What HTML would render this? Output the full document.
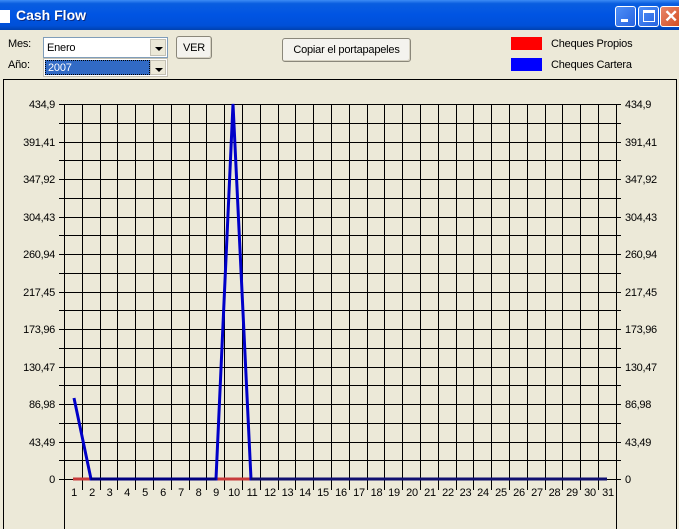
<!DOCTYPE html>
<html><head><meta charset="utf-8"><style>
*{margin:0;padding:0;box-sizing:border-box}
body{width:679px;height:529px;overflow:hidden;background:#ece9d8;font-family:"Liberation Sans",sans-serif;font-size:11px;letter-spacing:-0.2px;position:relative;color:#000}
.a{position:absolute}
.title{left:0;top:0;width:679px;height:30px;background:linear-gradient(#3d8cf5 0,#0a5ee0 12%,#0054e3 50%,#0050d8 85%,#0041b0 100%)}
.tb{top:6px;width:21px;height:21px;border:1px solid #fff;border-radius:3px;background:linear-gradient(135deg,#4f8ff7,#2663e0)}
.btn{background:#f4f3ee;border:1px solid #8a877a;border-radius:3px;text-align:center;box-shadow:inset -1px -1px 0 #d6d2c2}
.combo{background:#fff;border:1px solid #7f9db9}
.arr{position:absolute;right:1px;top:1px;width:16px;background:#ece9d8;border:1px solid #c4c1b4}
.arr:after{content:"";position:absolute;left:4px;top:7px;border:4px solid transparent;border-top:4px solid #000;border-bottom:0}
</style></head><body>
<div class="a title"></div>
<div class="a" style="left:0;top:10px;width:10px;height:13px;background:#fff"></div>
<div class="a" style="left:16px;top:7px;color:#fff;font-weight:bold;font-size:14px;letter-spacing:0;text-shadow:1px 1px 0 #0a2a80">Cash Flow</div>
<div class="a tb" style="left:615px"><div class="a" style="left:5px;top:12px;width:7px;height:3px;background:#fff"></div></div>
<div class="a tb" style="left:638px"><div class="a" style="left:4px;top:3px;width:12px;height:12px;border:1px solid #fff;border-top-width:3px"></div></div>
<div class="a tb" style="left:660px;width:22px;background:linear-gradient(135deg,#e8866a,#d24c20)"><div class="a" style="left:3px;top:0;color:#fff;font-size:17px;font-weight:bold">✕</div></div>

<div class="a" style="left:8px;top:38px">Mes:</div>
<div class="a" style="left:8px;top:59px">Año:</div>
<div class="a combo" style="left:43px;top:37px;width:125px;height:21px"><span class="a" style="left:3px;top:4px">Enero</span><div class="arr" style="height:17px"></div></div>
<div class="a combo" style="left:43px;top:58px;width:125px;height:19px;border-color:#c4c1b4"><div class="a" style="left:1px;top:1px;width:105px;height:15px;background:#316ac5;border:1px dotted #000;color:#fff;padding:1px 0 0 2px">2007</div><div class="arr" style="height:15px"></div></div>
<div class="a btn" style="left:176px;top:36px;width:36px;height:23px;padding-top:5px">VER</div>
<div class="a btn" style="left:282px;top:38px;width:129px;height:24px;padding-top:5px">Copiar el portapapeles</div>
<div class="a" style="left:511px;top:37px;width:31px;height:13px;background:#f00"></div>
<div class="a" style="left:511px;top:58px;width:31px;height:13px;background:#00f"></div>
<div class="a" style="left:551px;top:38px">Cheques Propios</div>
<div class="a" style="left:551px;top:59px">Cheques Cartera</div>

<svg class="a" style="left:0;top:0" width="679" height="529" font-family="Liberation Sans, sans-serif" font-size="11" letter-spacing="-0.3">
<rect x="3.5" y="79.5" width="673" height="460" fill="none" stroke="#000"/>
<g stroke="#000" stroke-width="1" shape-rendering="crispEdges" id="g"></g>
<g id="t"></g>
<polyline points="73,479 91,479" stroke="#c83c3c" stroke-width="3" fill="none"/>
<polyline points="215,479 251,479" stroke="#c83c3c" stroke-width="3" fill="none"/>
<polyline points="74,398 91,479 216,479 233,104 251,479 607,479" stroke="#0000c8" stroke-width="3" fill="none"/>
<polyline points="91,479 216,479" stroke="#000080" stroke-width="3" fill="none"/>
<polyline points="251,479 607,479" stroke="#101070" stroke-width="3" fill="none"/>
</svg>
<script>
var xs=[64,82,100,117,135,153,171,189,206,224,242,260,278,295,313,331,349,367,384,402,420,438,456,473,491,509,527,545,562,580,598,616];
var g=document.getElementById('g'),t=document.getElementById('t'),s='',u='';
xs.forEach(function(x,i){var y2=(i==0||i==31)?529:490;s+='<line x1="'+(x+.5)+'" y1="104" x2="'+(x+.5)+'" y2="'+y2+'"/>';
if(i<31){u+='<text x="'+((x+xs[i+1])/2+1)+'" y="496" text-anchor="middle">'+(i+1)+'</text>';}});
var labs=['434,9','391,41','347,92','304,43','260,94','217,45','173,96','130,47','86,98','43,49','0'];
for(var k=0;k<=20;k++){var y=Math.round(104+18.75*k);s+='<line x1="59" y1="'+(y+.5)+'" x2="621" y2="'+(y+.5)+'"/>';
if(k%2==0){u+='<text x="55" y="'+(y+4)+'" text-anchor="end">'+labs[k/2]+'</text><text x="625" y="'+(y+4)+'">'+labs[k/2]+'</text>';}}
g.innerHTML=s;t.innerHTML=u;
</script>
</body></html>
